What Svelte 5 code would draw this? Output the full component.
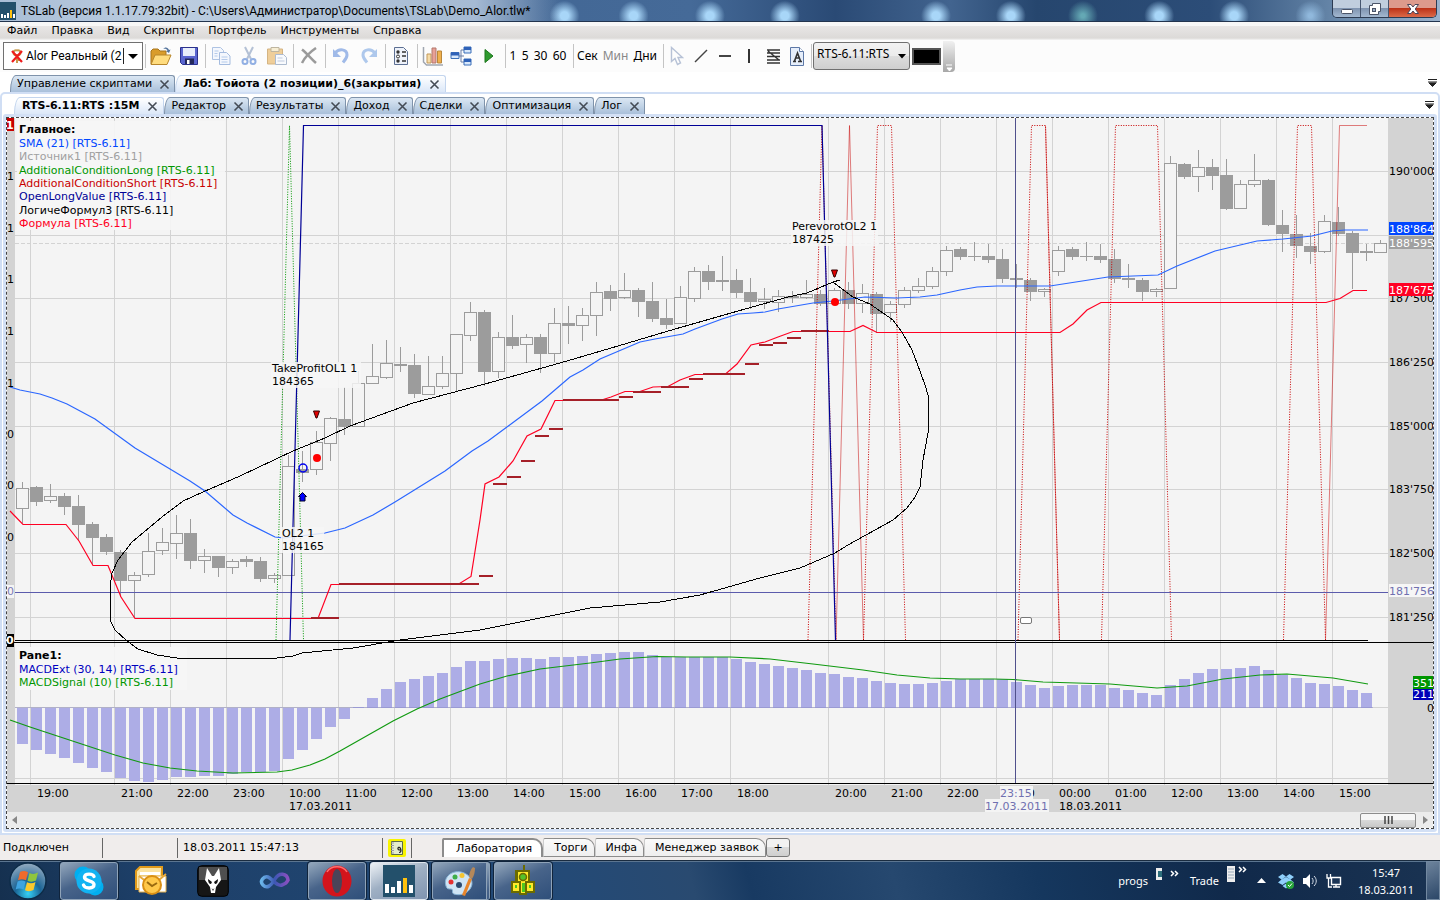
<script>
    const menu = ['Файл', 'Правка', 'Вид', 'Скрипты', 'Портфель', 'Инструменты', 'Справка'];

    const chartTabs = [
        { display: 'RTS-6.11:RTS :15M', active: true },
        { display: 'Редактор' },
        { display: 'Результаты' },
        { display: 'Доход' },
        { display: 'Сделки' },
        { display: 'Оптимизация' },
        { display: 'Лог' },
    ];

    const workspaces = ['Лаборатория', 'Торги', 'Инфа', 'Менеджер заявок'];

    const legend = [
        { y: 147, color: '#0046ff', text: 'SMA (21) [RTS-6.11]' },
        { y: 160, color: '#a0a0a0', text: 'Источник1 [RTS-6.11]' },
        { y: 174, color: '#009600', text: 'AdditionalConditionLong [RTS-6.11]' },
        { y: 187, color: '#c80000', text: 'AdditionalConditionShort [RTS-6.11]' },
        { y: 200, color: '#000096', text: 'OpenLongValue [RTS-6.11]' },
        { y: 214, color: '#000000', text: 'ЛогичеФормул3 [RTS-6.11]' },
        { y: 227, color: '#ff0023', text: 'Формула [RTS-6.11]' },
    ];

    const gridX = [
        30, 114, 170, 226, 282, 338, 394, 450, 506, 562, 618, 674, 730,
        828, 884, 940, 996, 1052, 1108, 1164, 1220, 1276, 1332,
    ];
    const hours = [
        '19', '21', '22', '23', '10', '11', '12', '13', '14', '15', '16', '17', '18',
        '20', '21', '22', '23', '00', '01', '12', '13', '14', '15',
    ];
    const gridY = [171, 235, 298, 362, 426, 489, 553, 617, 707, 778];

    const prices = [
        [175, "190'000"],
        [302, "187'500"],
        [366, "186'250"],
        [430, "185'000"],
        [493, "183'750"],
        [557, "182'500"],
        [621, "181'250"],
    ];
    const leftScale = [
        [180, 1], [232, 1], [283, 1], [335, 1], [387, 1],
        [438, 0], [489, 0], [541, 0],
    ];

    // high, body top, body bottom, low, falling
    const candles = [
        [482, 488, 508, 523, 0], [486, 487, 502, 506, 1], [484, 496, 500, 503, 0], [493, 496, 507, 515, 1],
        [495, 506, 525, 541, 1], [522, 524, 538, 565, 1], [534, 537, 552, 555, 1], [550, 552, 581, 597, 1],
        [572, 575, 580, 618, 0], [533, 551, 574, 577, 0], [528, 542, 550, 555, 0], [515, 533, 543, 559, 0],
        [519, 533, 561, 569, 1], [549, 556, 560, 573, 0], [556, 556, 568, 577, 1], [559, 561, 567, 574, 0],
        [556, 559, 562, 567, 1], [557, 561, 579, 582, 1], [573, 575, 578, 583, 0], [455, 466, 575, 575, 0],
        [451, 469, 473, 482, 1], [431, 442, 469, 475, 0], [417, 418, 443, 461, 0], [387, 419, 427, 435, 1],
        [371, 383, 426, 427, 0], [344, 376, 383, 384, 0], [340, 363, 377, 379, 0], [347, 364, 366, 372, 1],
        [354, 365, 394, 398, 1], [356, 386, 394, 395, 0], [356, 373, 386, 389, 0], [334, 334, 373, 391, 0],
        [302, 312, 335, 341, 0], [310, 312, 372, 386, 1], [332, 337, 371, 378, 0], [315, 337, 346, 349, 1],
        [334, 337, 344, 363, 0], [334, 337, 354, 373, 1], [308, 323, 353, 362, 0], [306, 323, 326, 344, 1],
        [308, 315, 325, 341, 0], [282, 292, 315, 336, 0], [285, 291, 299, 311, 1], [273, 290, 297, 299, 0],
        [288, 290, 302, 317, 1], [282, 301, 319, 322, 1], [299, 318, 325, 329, 1], [286, 297, 323, 324, 0],
        [267, 271, 298, 302, 0], [265, 271, 282, 290, 1], [256, 280, 282, 291, 1], [269, 280, 293, 298, 1],
        [278, 292, 302, 309, 1], [288, 299, 301, 309, 0], [290, 296, 302, 312, 0], [291, 296, 298, 303, 1],
        [280, 294, 297, 299, 0], [290, 294, 304, 306, 1], [288, 290, 303, 305, 0], [282, 290, 304, 309, 1],
        [284, 293, 303, 313, 0], [292, 294, 314, 333, 1], [301, 304, 312, 322, 0], [287, 290, 304, 308, 0],
        [278, 286, 290, 293, 0], [267, 271, 286, 289, 0], [246, 250, 271, 276, 0], [247, 249, 257, 260, 1],
        [242, 256, 257, 261, 1], [244, 256, 260, 263, 1], [249, 259, 279, 283, 1], [264, 278, 280, 288, 1],
        [278, 280, 292, 301, 1], [288, 289, 291, 297, 0], [246, 250, 271, 276, 0], [247, 249, 257, 260, 1],
        [242, 256, 257, 261, 1], [244, 256, 260, 263, 1], [249, 259, 279, 283, 1], [264, 278, 280, 288, 1],
        [278, 280, 292, 301, 1], [288, 289, 291, 297, 0], [156, 163, 288, 288, 0], [163, 164, 177, 179, 1],
        [150, 167, 176, 192, 0], [159, 167, 176, 190, 1], [159, 175, 209, 210, 1], [180, 184, 208, 208, 0],
        [154, 180, 184, 187, 0], [179, 180, 225, 226, 1], [210, 225, 234, 252, 1], [215, 234, 246, 258, 1],
        [233, 246, 252, 264, 1], [215, 221, 251, 253, 0], [207, 222, 234, 236, 1], [231, 233, 253, 289, 1],
        [244, 251, 253, 261, 1], [240, 243, 252, 253, 0],
    ];

    const ZERO = 708;
    const macd = [
        744, 750, 754, 758, 763, 768, 772, 778, 781, 782, 780, 777, 777, 776, 776, 774, 772, 772, 771, 759,
        750, 739, 727, 719, 707, 698, 689, 682, 679, 676, 673, 667, 661, 661, 659, 658, 658, 659, 657, 657,
        656, 654, 653, 652, 652, 655, 657, 657, 657, 657, 657, 659, 662, 664, 666, 668, 670, 673, 674, 677,
        678, 681, 683, 684, 684, 683, 681, 679, 679, 679, 679, 682, 685, 688, 686, 685, 685, 685, 688, 690,
        693, 695, 685, 679, 673, 669, 669, 668, 666, 670, 675, 678, 683, 684, 686, 690, 693,
    ];

    // trailing stop levels: from, to, y
    const stops = [
        [311, 339, 618], [339, 479, 584], [479, 493, 576], [493, 507, 484], [507, 521, 477],
        [521, 535, 461], [535, 549, 436], [549, 563, 429], [563, 619, 400], [619, 633, 397],
        [633, 661, 392], [661, 689, 387], [689, 703, 379], [703, 745, 374], [745, 759, 364],
        [759, 773, 345], [773, 787, 343], [787, 801, 338], [801, 829, 331],
    ];

    const sma = '10,387 20,390 40,394 52,398 67,404 95,419 135,448 170,469 190,481 205,491 233,515 247,523 275,537 284,538 325,533 345,528 373,515 395,502 445,471 472,451 488,441 542,401 570,377 583,370 600,359 640,342 655,339 683,334 695,329 722,319 738,314 753,313 765,312 778,309 813,303 833,301 865,297 897,298 920,297 937,295 960,290 977,287 997,286 1050,286 1108,277 1158,275 1177,266 1215,251 1257,241 1283,239 1312,236 1332,231 1345,230 1368,230';
    const formula = '10,511 23,524.5 66,524.5 79,541 93,565.5 108,565.5 121,597 135,618.5 318,618.5 331,584.5 458,584.5 471,576.5 480,520 485,484 499,477 513,461 527,436 541,429 555,400.5 600,400.5 611,397 625,391.5 640,391.5 653,387 668,386.5 680,380 695,374.5 725,374.5 737,364 751,345 765,342 778,337 793,331.5 850,331.5 863,325.5 877,332.5 1060,332.5 1073,324 1087,310 1101,302.5 1326,302.5 1340,298.5 1353,290.5 1367,290.5';
    const signal = '10,720 30,727 115,755 143,763 170,768 197,771 233,773 277,772 292,770 310,765 325,759 340,751 393,721 417,709 440,699 480,684 507,676 540,669 590,663 620,659 657,656.5 687,657 730,657 770,659 813,664 863,670 897,675 930,678 960,679 993,679 1013,679.5 1043,682 1110,684 1157,688 1187,686 1223,679 1260,675 1287,674 1333,678 1368,684';
    const loop = '840,280 833,282 807,293 788,297 738,311 675,329 618,346 560,363 485,384 413,403 350,426 325,438 293,451 240,476 203,492 183,501 162,517 132,542 118,560 112,573 110,587 110,620 115,630 127,641 138,649 157,655 177,658 277,658 293,656 302,653 353,648 400,640 480,630 545,617 590,608 660,602 700,595 760,578 800,568 835,553 848,545 893,520 907,508 915,497 920,487 923,460 928,433 928,395 925,385 917,363 912,350 902,332 893,320 883,313 870,304 853,297 842,289 833,282';

    const shortDotted = [
        '808,640 822,125.5 836,640',
        '863.5,640 877.5,125.5 891.5,125.5 905.5,640',
        '1018,640 1031.5,125.5 1045.5,125.5 1059.5,640',
        '1101.5,640 1115.5,125.5 1157.5,125.5 1171.5,640',
        '1283.5,640 1297.5,125.5 1311.5,125.5 1325.5,640',
    ];
    const shortSolid = [
        '836,640 849.5,125.5 863.5,640',
        '1045.5,125.5 1059.5,640',
        '1325.5,640 1339.5,125.5 1367,125.5',
    ];

    const notes = [
        { x: 272, y: 372, w: 90, name: 'TakeProfitOL1 1', price: '184365' },
        { x: 282, y: 537, w: 43, name: 'OL2 1', price: '184165' },
        { x: 792, y: 230, w: 87, name: 'PerevorotOL2 1', price: '187425' },
    ];
</script>

{#snippet cross()}
    <svg class="cross" width="11" height="11" viewBox="0 0 11 11"><path d="M1.5 1.5l8 8M9.5 1.5l-8 8" stroke="#444b55" stroke-width="1.6" /></svg>
{/snippet}

{#snippet overflow()}
    <svg width="9" height="9" viewBox="0 0 9 9"><path d="M0 1.5h9M0 4h9M1 5h7L4.500 8.500z" stroke="#222" fill="#222" stroke-width="1" /></svg>
{/snippet}

<div class="window">
    <header class="titlebar">
        <svg width="16" height="18" viewBox="0 0 16 18">
            <path fill="#23506b" d="M0 0h16v18H0z" />
            <path fill="#fff" d="M1 12h2v4H1zM4 13h2v3H4zM7 11h2v5H7zM13 12h2v4h-2z" />
            <path fill="#ffc20e" d="M10 8h2v8h-2z" />
        </svg>
        <h1>TSLab (версия 1.1.17.79:32bit) - C:\Users\Администратор\Documents\TSLab\Demo_Alor.tlw*</h1>
        <div class="caption-buttons">
            <button aria-label="Свернуть">
                <svg width="14" height="14" viewBox="0 0 14 14"><rect x="1.500" y="7.500" width="11" height="4" rx="1" fill="#fff" stroke="#4a5468" /></svg>
            </button>
            <button aria-label="Восстановить">
                <svg width="14" height="14" viewBox="0 0 14 14"><path d="M4.500 1.500h8v8h-2v3h-9v-9h3z" fill="#fff" stroke="#4a5468" /><rect x="4.500" y="6.500" width="3" height="3" fill="#9fb0c8" stroke="#4a5468" /></svg>
            </button>
            <button class="close" aria-label="Закрыть">
                <svg width="14" height="12" viewBox="0 0 14 12"><path d="M1.500 1.500h3.500l2 2.500 2-2.500h3.500L9.200 6l3.300 4.500H9L7 8l-2 2.500H1.500L4.800 6z" fill="#fff" stroke="#4a4458" /></svg>
            </button>
        </div>
    </header>

    <nav class="menu">
        {#each menu as item}
            <button>{item}</button>
        {/each}
    </nav>

    <div class="toolbar">
        <div class="account">
            <svg width="14" height="16" viewBox="0 0 14 16">
                <path d="M7 2.500a2.500 2.500 0 1 1 0 4.500 2.500 2.500 0 1 1 0-4.500M7 7v8M7 12h3" fill="none" stroke="#c69a4c" stroke-width="2" />
                <path d="M2 3l10 11M12 3L2 14" stroke="#ee1c1c" stroke-width="2.200" />
            </svg>
            <select aria-label="Источник данных"><option>Alor Реальный (2</option></select>
            <svg class="arrow" width="19" height="18" viewBox="0 0 19 18"><path d="M.5 1v16" stroke="#222" /><path d="M5 7h10l-5 5z" /></svg>
        </div>
        <span class="sep"></span>
        <button aria-label="Открыть">
            <svg width="22" height="20" viewBox="0 0 22 20"><path d="M1 5l2-2h5l2 2h6v13H1z" fill="#d99c2b" stroke="#a8751c" /><path d="M5 9h16l-4 9.500H1z" fill="#ffdc7e" stroke="#b8862b" /><path d="M13 3c2-2.500 5-2 6 1l1.500-.5L19 7l-3-2 1.500-.5C17 3 15 2.500 13 3z" fill="#54749c" /></svg>
        </button>
        <button aria-label="Сохранить">
            <svg width="20" height="20" viewBox="0 0 20 20"><path d="M1.500 1.500h17v17h-15l-2-2z" fill="#5a66d0" stroke="#2b318c" /><path d="M4 2h12v8H4z" fill="#e8eefb" /><path d="M6 12.500h9V18H6z" fill="#23285c" /><path d="M8 14h2.500v4H8z" fill="#fff" /></svg>
        </button>
        <span class="sep"></span>
        <button class="faded" aria-label="Копировать">
            <svg width="20" height="20" viewBox="0 0 20 20"><path d="M1.500 1.500h8l3 3v9h-11z" fill="#eef4ff" stroke="#6f95cf" /><path d="M8.500 6.500h7l3.500 3.500v8.500H8.500z" fill="#eef4ff" stroke="#5f88c8" /><path d="M3.500 5h4M3.500 7.500h3M3.500 10h3M10.500 11h6M10.500 13.500h6M10.500 16h6" stroke="#7da2dc" /></svg>
        </button>
        <button class="faded" aria-label="Вырезать">
            <svg width="16" height="20" viewBox="0 0 16 20"><path d="M4 1l6 12M12 1L6 13" stroke="#7a91b6" stroke-width="2" /><circle cx="4" cy="15.500" r="2.500" fill="none" stroke="#3b72d0" stroke-width="2" /><circle cx="12" cy="15.500" r="2.500" fill="none" stroke="#3b72d0" stroke-width="2" /></svg>
        </button>
        <button class="faded" aria-label="Вставить">
            <svg width="22" height="20" viewBox="0 0 22 20"><path d="M1.500 3h15v15h-15z" fill="#e5a94a" stroke="#b47b22" /><path d="M5 1.500h8v4H5z" fill="#f3e3b5" stroke="#8d7c55" /><path d="M9.500 8.500h8l3 3v7h-11z" fill="#f6f9ff" stroke="#6e86ab" /><path d="M11.500 12h5M11.500 15h7" stroke="#8da3c6" /></svg>
        </button>
        <span class="sep"></span>
        <button aria-label="Удалить">
            <svg width="18" height="18" viewBox="0 0 18 18"><path d="M2 2.500c5 4 9 9 14 13.500M16 1C10 5 5 10 2 16" fill="none" stroke="#9a9a9a" stroke-width="2.500" /></svg>
        </button>
        <span class="sep"></span>
        <button class="faded" aria-label="Отменить">
            <svg width="18" height="18" viewBox="0 0 18 18"><path d="M3 6c4-5 12-4 12 2 0 3-2 5-4 7.500" fill="none" stroke="#5585d8" stroke-width="3" /><path d="M1 2v8h8z" fill="#5585d8" /></svg>
        </button>
        <button class="faded" aria-label="Повторить">
            <svg width="18" height="18" viewBox="0 0 18 18"><path d="M15 6C11 1 3 2 3 8c0 3 2 5 4 7.500" fill="none" stroke="#6f9fe0" stroke-width="3" /><path d="M17 2v8H9z" fill="#6f9fe0" /></svg>
        </button>
        <span class="sep"></span>
        <button aria-label="Свойства">
            <svg width="16" height="20" viewBox="0 0 16 20"><path d="M1.500 1.500h9l4 4v13h-13z" fill="#eef2fa" stroke="#5c6f92" /><path d="M9 6h4M9 10h4M9 15h4" stroke="#333" stroke-width="1.500" /><circle cx="5" cy="6" r="1.700" fill="#333" /><circle cx="5" cy="10.500" r="1.500" fill="#fff" stroke="#333" /><circle cx="5" cy="15" r="1.700" fill="#333" /></svg>
        </button>
        <span class="sep"></span>
        <button aria-label="График">
            <svg width="22" height="20" viewBox="0 0 22 20"><path d="M1.500 1v15l3 3H21" fill="none" stroke="#a0a6b0" stroke-width="1.500" /><path d="M5 8h4v9H5z" fill="#f6dca8" stroke="#c2995a" /><path d="M10 2h4v15h-4z" fill="#e8a096" stroke="#b3786c" /><path d="M15.500 5h4v12h-4z" fill="#f0b04c" stroke="#b8863c" /></svg>
        </button>
        <button aria-label="Схема">
            <svg width="22" height="20" viewBox="0 0 22 20"><path d="M8 10h6M11 4v12M11 4h3M11 16h3" fill="none" stroke="#6a7ea6" /><path d="M1 6.500h8v6H1zM14 1h7v6h-7zM14 13h7v6h-7z" fill="#d8e8fb" stroke="#3a6fb8" /><path d="M1 6.500h8v3H1zM14 1h7v3h-7zM14 13h7v3h-7z" fill="#2f62b8" /></svg>
        </button>
        <button aria-label="Запустить">
            <svg width="14" height="16" viewBox="0 0 14 16"><path d="M3 1.500L11 8l-8 6.500z" fill="#2f9a2f" stroke="#1c761c" /></svg>
        </button>
        <span class="sep"></span>
        <div class="periods">
            <button>1</button><button>5</button><button>30</button><button>60</button>
        </div>
        <span class="sep"></span>
        <div class="periods units">
            <button>Сек</button><button class="current">Мин</button><button>Дни</button>
        </div>
        <span class="sep"></span>
        <div class="tools">
            <button class="faded" aria-label="Курсор">
                <svg width="14" height="20" viewBox="0 0 14 20"><path d="M1.500 1.500v14l3.500-3 2.500 6 3-1.500-2.500-5.500h4.500z" fill="#fff" stroke="#7f93b8" stroke-width="1.400" /></svg>
            </button>
            <button aria-label="Линия"><svg width="14" height="14" viewBox="0 0 14 14"><path d="M1 13L13 1" stroke="#444" stroke-width="1.500" /></svg></button>
            <button aria-label="Горизонталь"><svg width="12" height="4" viewBox="0 0 12 4"><path d="M0 2h12" stroke="#444" stroke-width="2" /></svg></button>
            <button aria-label="Вертикаль"><svg width="4" height="14" viewBox="0 0 4 14"><path d="M2 0v14" stroke="#333" stroke-width="2" /></svg></button>
            <button aria-label="Уровни"><svg width="13" height="15" viewBox="0 0 13 15"><path d="M0 1h13M0 4h13M0 7.500h13M0 11h13M0 14h13M1 2l11 9" stroke="#333" stroke-width="1.400" /></svg></button>
            <button aria-label="Текст">
                <svg width="16" height="19" viewBox="0 0 16 19"><path d="M1.500.5h9l4 4v14h-13z" fill="#e6eefa" stroke="#5d78a6" /><path d="M10.500.5v4h4" fill="#fff" stroke="#5d78a6" /><path d="M4 14.500h3M9 14.500h4M5.500 14L8.500 6l3 8M6.500 11h4" stroke="#333" fill="none" stroke-width="1.600" /></svg>
            </button>
        </div>
        <span class="sep"></span>
        <div class="security">
            <select aria-label="Инструмент"><option>RTS-6.11:RTS</option></select>
            <svg class="arrow" width="8" height="5" viewBox="0 0 8 5"><path d="M0 0h8L4 4.500z" /></svg>
        </div>
        <button class="swatch" aria-label="Цвет"></button>
        <button class="grip" aria-label="Ещё">
            <svg width="10" height="8" viewBox="0 0 10 8"><path d="M2 1h6M3 4h5L5.500 7z" stroke="#fff" fill="#fff" /></svg>
        </button>
    </div>

    <nav class="tabs outer">
        <div class="tab"><button>Управление скриптами</button><button aria-label="Закрыть вкладку">{@render cross()}</button></div>
        <div class="tab active"><button>Лаб: Тойота (2 позиции)_6(закрытия)</button><button aria-label="Закрыть вкладку">{@render cross()}</button></div>
        <button class="more" aria-label="Список вкладок">{@render overflow()}</button>
    </nav>

    <main class="frame">
        <nav class="tabs inner">
            {#each chartTabs as tab}
                <div class="tab" class:active={tab.active}>
                    <button>{tab.display}</button><button aria-label="Закрыть вкладку">{@render cross()}</button>
                </div>
            {/each}
            <button class="more" aria-label="Список панелей">{@render overflow()}</button>
        </nav>

        <div class="pane">
            <div class="dotted">
                <svg class="chart" viewBox="7 118 1426 694">
                    <rect x="7" y="118" width="1426" height="694" fill="#d3d3d3" />
                    <rect x="15" y="118" width="1373" height="667" fill="#f4f4f4" />

                    <g stroke="#d3d3d3" stroke-width="1" shape-rendering="crispEdges">
                        {#each gridX as x}
                            <path d="M{x}.5 118V785" />
                        {/each}
                        {#each gridY as y}
                            <path d="M15 {y}.5H1388" />
                        {/each}
                        <path d="M15 243.5H1388" stroke-dasharray="4 2" />
                    </g>

                    <rect x="17" y="121" width="208" height="109" fill="#f6f6f6" opacity="0.900" />
                    <rect x="17" y="647" width="170" height="43" fill="#f6f6f6" opacity="0.900" />

                    {#each candles as [high, top, bottom, low, falling], i}
                        <g class="candle" transform="translate({16 + i * 14} 0)">
                            <path d="M6.5 {high}V{low}" />
                            {#if falling}
                                <rect class="solid" y={top} width="13" height={bottom - top} />
                            {:else}
                                <rect class="hollow" x="0.5" y={top + 0.5} width="12" height={bottom - top} />
                            {/if}
                        </g>
                    {/each}

                    {#each macd as y, i}
                        <rect x={17 + i * 14} y={Math.min(y, ZERO)} width="11" height={Math.abs(y - ZERO)} fill="#adade6" />
                    {/each}
                    <path d="M15 707.5H1373" stroke="#8080b8" opacity="0.400" />

                    <g fill="none">
                        <polyline points="276,640 289.5,125.5 303.5,640" stroke="#009600" stroke-dasharray="1 1.5" />
                        {#each shortDotted as points}
                            <polyline {points} stroke="#c80000" stroke-dasharray="1 1.5" />
                        {/each}
                        {#each shortSolid as points}
                            <polyline {points} stroke="#c80000" opacity="0.500" />
                        {/each}
                        <path d="M15 592.500H1388" stroke="#5b5bac" />
                        <polyline points={sma} stroke="#2a66ff" stroke-width="1.200" />
                        <polyline points={formula} stroke="#ff0023" stroke-width="1.200" />
                        {#each stops as [from, to, y]}
                            <path d="M{from} {y}H{to}" stroke="#a52028" stroke-width="2" />
                        {/each}
                        <polyline points="290,640 303.5,125.5 822,125.5 835.5,640" stroke="#000096" stroke-width="1.200" />
                        <polyline points={signal} stroke="#109a10" stroke-width="1.200" />
                        <path d="M15 640.500H1368M7 642.500H1433M7 783.500H1433" stroke="#000" />
                        <polyline points={loop} stroke="#000" shape-rendering="crispEdges" />
                        <path d="M1015.500 118V783" stroke="#50508c" />
                    </g>

                    {#each [[316.5, 411], [834.5, 270]] as [x, y]}
                        <path d="M{x - 3} {y}h6l-2.500 7h-1z" fill="#e00000" stroke="#300" />
                    {/each}
                    <circle cx="317" cy="458" r="4" fill="#f00" />
                    <circle cx="835" cy="302" r="4" fill="#f00" />
                    <circle cx="303" cy="468" r="4" fill="none" stroke="#0000ee" stroke-width="1.500" />
                    <path d="M302.500 492.500l4 4h-1.500v4.500h-5v-4.500h-1.500z" fill="#00f" stroke="#002" />
                    <rect x="1020.500" y="617.500" width="11" height="6" rx="1.500" fill="#fff" stroke="#777" />

                    {#each notes as note}
                        <rect x={note.x - 1} y={note.y - 10} width={note.w} height="26" fill="#f6f6f6" opacity="0.850" />
                        <text x={note.x} y={note.y}>{note.name}</text>
                        <text x={note.x} y={note.y + 13}>{note.price}</text>
                    {/each}

                    <text class="bold" x="19" y="133">Главное:</text>
                    {#each legend as item}
                        <text x="19" y={item.y} fill={item.color}>{item.text}</text>
                    {/each}
                    <text class="bold" x="19" y="659">Pane1:</text>
                    <text x="19" y="673" fill="#0000c0">MACDExt (30, 14) [RTS-6.11]</text>
                    <text x="19" y="686" fill="#009600">MACDSignal (10) [RTS-6.11]</text>

                    {#each leftScale as [y, value]}
                        <text x="7" {y}>{value}</text>
                    {/each}
                    <rect x="7" y="118" width="7" height="13" fill="#c80000" />
                    <text class="bold" x="6" y="129" fill="#fff">1</text>
                    <rect x="7" y="585" width="7" height="13" fill="#f4f4f4" />
                    <text x="7" y="595" fill="#7d7db8">0</text>
                    <rect x="7" y="634" width="7" height="13" fill="#000" />
                    <text class="bold" x="6" y="644" fill="#fff">0</text>

                    <g class="prices">
                        {#each prices as [y, value]}
                            <text x="1434" {y}>{value}</text>
                        {/each}
                        <rect x="1389" y="222" width="44" height="13" fill="#0046ff" />
                        <text x="1434" y="233" fill="#fff">188'864</text>
                        <rect x="1389" y="236" width="44" height="13" fill="#a0a0a0" />
                        <text x="1434" y="247" fill="#fff">188'595</text>
                        <rect x="1389" y="283" width="44" height="13" fill="#ff0023" />
                        <text x="1434" y="294" fill="#fff">187'675</text>
                        <rect x="1389" y="584" width="44" height="13" fill="#f6f6f6" />
                        <text x="1434" y="595" fill="#7070b0">181'756</text>
                        <rect x="1413" y="688" width="20" height="12" fill="#0000b8" />
                        <text x="1434" y="698" fill="#fff">211</text>
                        <rect x="1413" y="676" width="20" height="13" fill="#009600" />
                        <text x="1434" y="687" fill="#fff">351</text>
                        <text x="1434" y="712">0</text>
                    </g>

                    {#each gridX as x, i}
                        <text x={x + 7} y="797">{hours[i]}:00</text>
                    {/each}
                    <text x="289" y="810">17.03.2011</text>
                    <text x="1059" y="810">18.03.2011</text>
                    <rect x="1000" y="786" width="33" height="13" fill="#f4f4f4" />
                    <rect x="985" y="799" width="64" height="13" fill="#f4f4f4" />
                    <text x="1000" y="797" fill="#7070b0">23:15</text>
                    <text x="985" y="810" fill="#7070b0">17.03.2011</text>
                </svg>
                <div class="scrollbar">
                    <button aria-label="Назад"><svg width="5" height="8" viewBox="0 0 5 8"><path d="M5 0v8L0 4z" fill="#888" /></svg></button>
                    <button class="thumb" aria-label="Прокрутка"><svg width="9" height="8" viewBox="0 0 9 8"><path d="M1 0v8M4.500 0v8M8 0v8" stroke="#444" stroke-width="1.500" /></svg></button>
                    <button aria-label="Вперёд"><svg width="5" height="8" viewBox="0 0 5 8"><path d="M0 0v8l5-4z" fill="#888" /></svg></button>
                </div>
            </div>
        </div>
    </main>

    <footer class="status">
        <span class="cell state">Подключен</span>
        <span class="cell blank"></span>
        <span class="cell clock">18.03.2011 15:47:13</span>
        <span class="cell journal">
            <svg width="18" height="18" viewBox="0 0 18 18"><rect width="18" height="18" rx="2" fill="#f8f400" /><path d="M3.500 2.500h11v13h-11z" fill="#e4eccb" stroke="#5a6b4a" /><path d="M3 4h3M3 6.500h3M3 9h3M3 11.500h3M3 14h3" stroke="#99a" /><path d="M11 13.500c2 0 2.500-2 1.500-4s-3-1-2.500.5 2 1 3 .5" fill="none" stroke="#222" stroke-width="1.200" /></svg>
        </span>
        <div class="workspaces">
            {#each workspaces as name, i}
                <button class:active={i === 0}>{name}</button>
            {/each}
            <button class="add">+</button>
        </div>
    </footer>

    <div class="taskbar">
        <button class="start" aria-label="Пуск">
            <svg width="38" height="38" viewBox="0 0 38 38">
                <defs>
                    <radialGradient id="orb" cx="50%" cy="85%" r="80%"><stop offset="0" stop-color="#35d2f6" /><stop offset=".45" stop-color="#1b6596" /><stop offset="1" stop-color="#8aa5bd" /></radialGradient>
                </defs>
                <circle cx="19" cy="19" r="18" fill="url(#orb)" stroke="#0d2c48" stroke-width="1.500" />
                <path d="M11 10c3-1.500 5-1.200 8 .2l-2 8c-3-1.300-5-1.500-8 0z" fill="#ee6a2c" />
                <path d="M20.500 11c3 1.300 5.500 1.200 8.500-.5l-2 8c-3 1.500-5.500 1.500-8.500.2z" fill="#8fc63d" />
                <path d="M8.600 19.500c3-1.500 5-1.300 8 0l-2 8c-3-1.300-5-1.500-8 0z" fill="#3fa4e0" />
                <path d="M18 20.300c3 1.300 5.500 1.200 8.500-.3l-2 8c-3 1.500-5.500 1.500-8.500.2z" fill="#fcc92c" />
            </svg>
        </button>
        <button class="task open" aria-label="Skype">
            <svg width="30" height="30" viewBox="0 0 30 30"><circle cx="9" cy="9" r="8.500" fill="#00aff0" /><circle cx="21" cy="21" r="8.500" fill="#00aff0" /><circle cx="15" cy="15" r="12.500" fill="#12b3f2" /><path d="M20 10.500C19 7.500 11 7 10.500 11c-.3 4.500 9.500 3 9.500 7.500 0 4.500-9 4.500-10.500.5" fill="none" stroke="#fff" stroke-width="3.400" stroke-linecap="round" /></svg>
        </button>
        <button class="task" aria-label="Outlook">
            <svg width="32" height="30" viewBox="0 0 32 30"><path d="M1 5l4-4h22v22H1z" fill="#fbe3a0" stroke="#e09a1a" stroke-width="2" /><path d="M5 6h20v3H5z" fill="#fff" /><path d="M4 10h27v16H4z" fill="#fff" stroke="#e3b04c" /><path d="M4 10l13 10 14-12" fill="none" stroke="#e6a93a" stroke-width="2" /><circle cx="17" cy="19" r="9" fill="#ffc84a" stroke="#d98f14" stroke-width="2" /><path d="M12 16l5 4 5-3" fill="none" stroke="#9a6a10" stroke-width="2" /></svg>
        </button>
        <button class="task" aria-label="foobar2000">
            <svg width="32" height="32" viewBox="0 0 32 32"><rect x=".7" y=".7" width="30.600" height="30.600" rx="4" fill="#161616" stroke="#000" /><path d="M2 2h28v13H2z" fill="#777" opacity=".6" /><path d="M10 3l5 8h2l5-8 2 12-5 7-1 6h-4l-1-6-5-7z" fill="#fff" /><path d="M11 14l4 3-1 2c-2 0-3-2-3-5zM21 14l-4 3 1 2c2 0 3-2 3-5zM14.500 23l1.500 1.500 1.500-1.500-1.500 3z" fill="#111" /></svg>
        </button>
        <button class="task" aria-label="Visual Studio">
            <svg width="32" height="20" viewBox="0 0 32 20">
                <defs><linearGradient id="vs"><stop offset="0" stop-color="#6ab4e8" /><stop offset=".5" stop-color="#3d57b4" /><stop offset="1" stop-color="#8a4fc0" /></linearGradient></defs>
                <path d="M29 9C28 2 20 1 16 8S8 18 4 14s1-9 5-8 8 10 14 8 5-4 6-5z" fill="none" stroke="url(#vs)" stroke-width="3.500" />
            </svg>
        </button>
        <button class="task open" aria-label="Opera">
            <svg width="32" height="32" viewBox="0 0 32 32"><ellipse cx="16" cy="16" rx="14.500" ry="15.500" fill="#d3141c" /><ellipse cx="16" cy="16" rx="5" ry="12" fill="#4a4458" /><path d="M6 7c4-7 16-7 20 0" stroke="#ff7070" fill="none" stroke-width="1.500" /></svg>
        </button>
        <button class="task open front" aria-label="TSLab">
            <svg width="32" height="32" viewBox="0 0 32 32"><path fill="#23506b" d="M0 0h32v32H0z" /><path fill="#fff" d="M2 19h4v9H2zM8 22h4v6H8zM14 16h4v12h-4zM26 20h4v8h-4z" /><path fill="#ffc20e" d="M20 13h4v15h-4z" /></svg>
        </button>
        <button class="task open stacked" aria-label="Paint">
            <svg width="32" height="32" viewBox="0 0 32 32"><path d="M2 21C-1 12 8 5 17 7s14 10 9 17-13 6-16 5 0-5-3-5-4 0-5-3z" fill="#cfe4f4" stroke="#88b4d6" /><circle cx="7" cy="17" r="2.500" fill="#e53030" /><circle cx="11" cy="12" r="2.500" fill="#3fae49" /><circle cx="18" cy="10.500" r="2.500" fill="#f4c430" /><circle cx="15" cy="20" r="3" fill="#2b4a70" /><path d="M18 30l7-17 3 1-7 17z" fill="#e8852a" /><path d="M25 12c0-4 2-8 4-10l2 1c0 4-1 8-3 11z" fill="#b5885a" /></svg>
        </button>
        <button class="task open" aria-label="QIP">
            <svg width="26" height="32" viewBox="0 0 26 32"><path d="M15 0v5h5v11h5v12h-8v2H9v-2H1V16h4V5h8V0z" fill="#6b6b00" /><path d="M8 7h10v9H8zM3 18h6v8H3zM17 18h6v8h-6zM11 16h4v12h-4z" fill="#ffe92a" /><circle cx="13" cy="12" r="3.500" fill="#55c428" stroke="#6b6b00" stroke-width="1.500" /><path d="M12 18h3v9h-3zM5 20h2v3H5zM19 20h2v3h-2z" fill="#4cc820" /></svg>
        </button>

        <div class="tray">
            <span class="band">progs</span>
            <svg class="high" width="6" height="12" viewBox="0 0 6 12"><path d="M0 0h6v12H0z" fill="#eee" /><path d="M2 3h4v6H2z" fill="#2e6f7c" /></svg>
            <svg class="high" width="9" height="7" viewBox="0 0 9 7"><path d="M1 1l2.500 2.500L1 6M5 1l2.500 2.500L5 6" fill="none" stroke="#fff" stroke-width="1.500" /></svg>
            <span class="band trade">Trade</span>
            <div class="band-end high">
                <svg width="8" height="16" viewBox="0 0 8 16"><path d="M0 0h8v16H0z" fill="#eee" /><path d="M1 3h6M1 6h6M1 9h6M1 12h6" stroke="#9ab" /></svg>
                <svg width="9" height="7" viewBox="0 0 9 7"><path d="M1 1l2.500 2.500L1 6M5 1l2.500 2.500L5 6" fill="none" stroke="#fff" stroke-width="1.500" /></svg>
            </div>
            <svg class="chevron" width="9" height="5" viewBox="0 0 9 5"><path d="M0 5h9L4.500 0z" fill="#fff" /></svg>
            <svg width="16" height="16" viewBox="0 0 16 16"><path d="M4.500 1L8 3.500 3.500 6.500 0 4zM11.500 1L8 3.500l4.500 3L16 4zM0 9.500l3.500-3L8 9.500 4.500 12zM16 9.500l-3.500-3L8 9.500l3.500 2.500zM8 4l4.500 2.500L8 9.500 3.500 6.500zM8 10.500l3.500 2.500L8 15.500 4.500 13z" fill="#8fd0fb" /><circle cx="12" cy="12" r="4" fill="#27a53a" /><path d="M10 12l1.500 1.500L14 10.500" fill="none" stroke="#fff" /></svg>
            <svg width="16" height="16" viewBox="0 0 16 16"><path d="M1 5h3l4-4v14l-4-4H1z" fill="#fff" /><path d="M10 5c1.500 2 1.500 4 0 6M12 3c3 3 3 7 0 10" fill="none" stroke="#d6dde8" /></svg>
            <svg width="16" height="16" viewBox="0 0 16 16"><path d="M5.500 4.500h9v7h-9zM7 14h7M10 12v2" fill="#1b3455" stroke="#fff" stroke-width="1.400" /><path d="M1 1v4h3.500V1M2.500 5v9H6" fill="none" stroke="#fff" stroke-width="1.300" /></svg>
            <div class="time"><span>15:47</span><span>18.03.2011</span></div>
            <button class="desktop" aria-label="Показать рабочий стол"></button>
        </div>
    </div>
</div>

<style>
    :global(body) {
        background: #fff;
    }

    .window {
        --text: 'DejaVu Sans', Verdana, sans-serif;
        --ui: 'Noto Sans', 'Segoe UI', sans-serif;
        --narrow: Roboto, 'Segoe UI', sans-serif;
        display: flex;
        flex-direction: column;
        min-height: 100vh;
        font: 11px/14px var(--text);
        color: #000;
    }

    button,
    select {
        font: inherit;
        color: inherit;
        margin: 0;
        padding: 0;
        border: 0;
        background: none;
        white-space: nowrap;
    }

    svg {
        display: block;
        flex: none;
    }

    .titlebar {
        display: flex;
        align-items: center;
        height: 22px;
        box-sizing: border-box;
        border-bottom: 1px solid #22344f;
        background:
            linear-gradient(90deg, #a9bed6 0, #bccde0 12%, #a5bad3 33%, rgba(80, 115, 160, 0) 39%),
            radial-gradient(circle at 39.200% 75%, #a8d6f8 4px, rgba(120, 170, 220, 0) 15px),
            radial-gradient(circle at 44% 75%, #a8d6f8 4px, rgba(120, 170, 220, 0) 15px),
            radial-gradient(circle at 49.300% 75%, #a8d6f8 4px, rgba(120, 170, 220, 0) 15px),
            radial-gradient(circle at 54.500% 75%, #a8d6f8 4px, rgba(120, 170, 220, 0) 15px),
            radial-gradient(circle at 65% 75%, #a8d6f8 4px, rgba(120, 170, 220, 0) 15px),
            radial-gradient(circle at 70.200% 75%, #a8d6f8 4px, rgba(120, 170, 220, 0) 15px),
            radial-gradient(circle at 75.200% 75%, #64a8b4 2px, rgba(100, 150, 180, 0) 15px),
            radial-gradient(circle at 80.500% 75%, #a8d6f8 4px, rgba(120, 170, 220, 0) 15px),
            radial-gradient(circle at 85.700% 75%, #a8d6f8 4px, rgba(120, 170, 220, 0) 15px),
            radial-gradient(circle at 91% 75%, #90b8dc 2px, rgba(120, 170, 220, 0) 15px),
            linear-gradient(90deg, #3a5e8c, #456a98 48%, #2a4a75 58%, #42648f 66%, #26466e 72%, #2c4d78 84%, #6f8fb0 94%, #9ab2cc);
    }

    .titlebar h1 {
        flex: 1;
        margin: 0 0 0 5px;
        font: 12px/20px var(--narrow);
        white-space: nowrap;
    }

    .caption-buttons {
        display: flex;
        align-self: flex-start;
        margin-right: 3px;
        border: 1px solid #2c3b52;
        border-top: 0;
        border-radius: 0 0 5px 5px;
        overflow: hidden;
    }

    .caption-buttons button {
        display: grid;
        place-items: center;
        width: 28px;
        height: 17px;
        border-right: 1px solid #46566f;
        background: linear-gradient(#c0cede 50%, #7f94b0 50%, #a3b8d0);
    }

    .caption-buttons .close {
        width: 47px;
        border-right: 0;
        background: linear-gradient(#dd9a8c 50%, #bd3318 50%, #dc6a48);
    }

    .menu {
        display: flex;
        gap: 14px;
        height: 18px;
        padding-left: 7px;
        background: linear-gradient(#f7f7f7 4px, #e8e6e6 4px, #dcdad8 16px, #f4f4f4);
    }

    .toolbar {
        display: flex;
        align-items: center;
        height: 32px;
        padding-left: 3px;
        background: #fcfcfc;
        font: 12px/16px var(--ui);
    }

    .toolbar > button {
        display: grid;
        place-items: center;
        width: 28px;
        height: 26px;
    }

    .toolbar .faded {
        opacity: .55;
    }

    .sep {
        width: 1px;
        height: 24px;
        margin: 0 1px 0 2px;
        background: #c4c4c4;
    }

    .account {
        display: flex;
        align-items: center;
        box-sizing: border-box;
        width: 140px;
        height: 28px;
        padding-left: 6px;
        border: 1px solid #707070;
        background: #fff;
        font-family: var(--narrow);
    }

    .account select {
        flex: 1;
        min-width: 0;
        padding-left: 2px;
        appearance: none;
    }

    .periods {
        display: flex;
        justify-content: space-around;
        box-sizing: border-box;
        width: 64px;
        padding-right: 2px;
    }

    .units {
        width: 86px;
        justify-content: space-between;
        padding: 0 4px 0 2px;
    }

    .current {
        color: #888;
    }

    .tools {
        display: flex;
    }

    .tools button {
        display: grid;
        place-items: center;
        width: 24px;
        height: 24px;
    }

    .security {
        display: flex;
        align-items: center;
        box-sizing: border-box;
        width: 97px;
        height: 28px;
        padding: 0 3px;
        border: 1px solid #707070;
        border-radius: 3px;
        background: linear-gradient(#f2f2f2, #ebebeb 50%, #dddddd 50%, #cfcfcf);
    }

    .security select {
        flex: 1;
        min-width: 0;
        height: 24px;
        padding-bottom: 4px;
        appearance: none;
    }

    .toolbar .swatch {
        width: 29px;
        height: 17px;
        margin: 0 2px;
        border: 2px solid #555;
        background: #000;
    }

    .toolbar .grip {
        align-items: end;
        width: 12px;
        height: 31px;
        border-radius: 0 4px 4px 0;
        background: linear-gradient(#f0f0f0, #a8a8a8);
    }

    .tabs {
        display: flex;
        align-items: flex-end;
    }

    .outer {
        height: 20px;
        padding: 0 3px 0 10px;
    }

    .inner {
        height: 19px;
        padding: 0 3px 0 11px;
    }

    .tab {
        display: flex;
        align-items: center;
        gap: 7px;
        height: 17px;
        box-sizing: border-box;
        padding: 0 4px 0 6px;
        border: 1px solid #7f93ab;
        border-bottom: 0;
        border-radius: 6px 3px 0 0 / 16px 3px 0 0;
        background: linear-gradient(#dbe7f3, #a9c0da);
    }

    .tab.active {
        gap: 8px;
        padding: 0 5px 0 7px;
        border-color: #c3d5ee;
        background: linear-gradient(#fff, #dbe7f8);
        font-weight: bold;
    }

    .more {
        align-self: center;
        margin-left: auto;
    }

    .frame {
        display: flex;
        flex-direction: column;
        flex: 1;
        padding: 1px;
        border: 2px solid #d0def4;
        border-radius: 5px 5px 0 0;
        background: #fff;
    }

    .pane {
        flex: 1;
        border: 3px solid #d3e0f5;
        border-radius: 3px;
    }

    .dotted {
        border: 1px dashed #444;
    }

    .chart {
        width: 100%;
        height: auto;
        font: 11px var(--text);
    }

    .chart .bold {
        font-weight: bold;
    }

    .candle path {
        stroke: #9c9c9c;
    }

    .solid {
        fill: #9c9c9c;
    }

    .hollow {
        fill: #f4f4f4;
        stroke: #9c9c9c;
    }

    .prices {
        text-anchor: end;
    }

    .scrollbar {
        display: flex;
        align-items: center;
        justify-content: space-between;
        height: 16px;
        padding: 0 5px;
        background: #ececec;
    }

    .thumb {
        display: grid;
        place-items: center;
        width: 56px;
        height: 15px;
        margin: 0 7px 0 auto;
        border: 1px solid #8c8c8c;
        border-radius: 2px;
        background: linear-gradient(#f6f6f6 50%, #d8d8d8 50%, #c8c8c8);
    }

    .status {
        display: flex;
        align-items: center;
        height: 25px;
        background: #f0edec;
    }

    .cell {
        display: flex;
        align-items: center;
        box-sizing: border-box;
        height: 20px;
        border-right: 1px solid #666;
    }

    .state {
        width: 103px;
        padding-left: 3px;
    }

    .blank {
        width: 75px;
    }

    .clock {
        width: 205px;
        padding-left: 5px;
    }

    .journal {
        width: 29px;
        padding-left: 5px;
    }

    .workspaces {
        display: flex;
        align-items: center;
        padding-left: 30px;
    }

    .workspaces button {
        height: 19px;
        box-sizing: border-box;
        padding: 0 6px 0 10px;
        border: 1px solid #8c8c8c;
        border-left-color: #ccc;
        border-radius: 2px 10px 0 0;
        background: linear-gradient(#fafafa, #efefef);
    }

    .workspaces .active {
        padding: 1px 9px 0 12px;
        border-width: 2px 2px 0;
        border-color: #8c8c8c;
        background: #fff;
    }

    .workspaces .add {
        width: 24px;
        padding: 0;
        border: 1px solid #777;
        border-radius: 3px;
        background: linear-gradient(#f2f2f2 50%, #dadada 50%, #cfcfcf);
    }

    .taskbar {
        display: flex;
        align-items: center;
        gap: 4px;
        height: 40px;
        box-sizing: border-box;
        border-top: 1px solid #1a2c40;
        background: linear-gradient(75deg, #15304f, #1d3f68 10%, #234a77 38%, #294a70 48%, #183a62 52%, #26486f 62%, #15375e 72%, #10294a 85%, #1a3352);
        box-shadow: inset 0 1px #5b7590;
    }

    .start {
        display: grid;
        place-items: center;
        width: 56px;
    }

    .task {
        display: grid;
        place-items: center;
        box-sizing: border-box;
        width: 58px;
        height: 38px;
    }

    .open {
        border: 1px solid #8fa3b8;
        border-radius: 3px;
        background: linear-gradient(155deg, #93a7bc, #48648a 45%, #2f4f7a);
        box-shadow: 0 0 0 1px #10243c;
    }

    .front {
        border-color: #dfe6ee;
        background: linear-gradient(155deg, #eef2f6, #9fb0c4 45%, #8094b0);
    }

    .stacked {
        border-right: 4px double #8fa3b8;
    }

    .tray {
        display: flex;
        align-items: center;
        gap: 8px;
        align-self: stretch;
        margin-left: auto;
        color: #fff;
        font: 11px/17px var(--ui);
    }

    .high {
        margin-bottom: 14px;
    }

    .trade {
        margin-left: 3px;
    }

    .band-end {
        display: flex;
        gap: 3px;
    }

    .chevron {
        margin-left: 2px;
        margin-right: 4px;
    }

    .time {
        display: flex;
        flex-direction: column;
        align-items: center;
        width: 72px;
    }

    .desktop {
        width: 14px;
        align-self: stretch;
        margin-left: -4px;
        border: 1px solid #7288a0;
        background: linear-gradient(155deg, #6d839c, #2c4768);
    }
</style>
